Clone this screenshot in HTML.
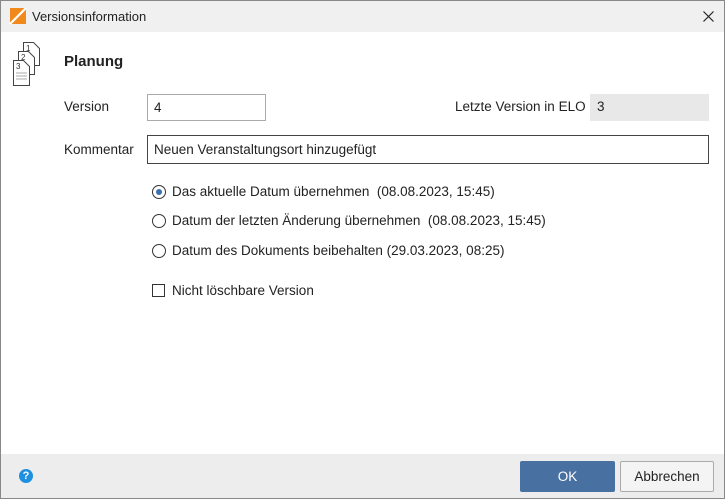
<html><head><style>
body{margin:0;width:725px;height:499px;overflow:hidden;font-family:"Liberation Sans",sans-serif;font-size:13.5px;color:#222}
.win{position:absolute;left:0;top:0;width:723px;height:497px;border:1px solid #888;background:#fff}
.title{position:absolute;left:0;top:0;width:723px;height:31px;background:#f0f0f0}
.abs{position:absolute}
.in{position:absolute;border:1px solid #aaa;background:#fff;box-sizing:border-box;padding:0 6px;line-height:26px}
.radio{position:absolute;width:12px;height:12px;border:1px solid #333;border-radius:50%;background:#fff}
.foot{position:absolute;left:0;top:453px;width:723px;height:44px;background:#ededee}
</style></head><body><div class="win">
<div class="title">
<div class="abs" style="left:9px;top:7px;width:16px;height:16px;background:#f08a1c"></div>
<div class="abs" style="left:8px;top:7px;width:18px;height:16px;background:linear-gradient(135deg,transparent 45%,#fff 46%,#fff 54%,transparent 55%)"></div>
<div class="abs" style="left:31px;top:8px;font-size:13px">Versionsinformation</div>
<svg class="abs" style="left:702px;top:10px" width="11" height="11"><path d="M0.5 0.5L10.5 10.5M10.5 0.5L0.5 10.5" stroke="#222" stroke-width="1.2"/></svg>
</div>
<svg class="abs" style="left:11px;top:40px" width="32" height="46" viewBox="0 0 32 46" fill="#fff" stroke="#444" stroke-width="1">
<path d="M11.5 1.5h10l6 6v17h-16z"/><path d="M6.5 10.5h10l6 6v17h-16z"/><path d="M1.5 19.5h10l6 6v19h-16z"/>
<text x="14" y="10" font-size="8" fill="#333" stroke="none">1</text><text x="9" y="19" font-size="8" fill="#333" stroke="none">2</text><text x="4" y="28" font-size="8" fill="#333" stroke="none">3</text>
<path d="M4 32h11M4 35h11M4 38h11" stroke="#aaa"/></svg>
<div class="abs" style="left:63px;top:52px;font-weight:bold;font-size:15px">Planung</div>
<div class="abs" style="left:63px;top:98px">Version</div>
<div class="in" style="left:146px;top:93px;width:119px;height:27px">4</div>
<div class="abs" style="left:454px;top:98px">Letzte Version in ELO</div>
<div class="abs" style="left:589px;top:93px;width:119px;height:27px;background:#e8e8e8;line-height:26px;padding-left:7px;box-sizing:border-box">3</div>
<div class="abs" style="left:63px;top:141px">Kommentar</div>
<div class="in" style="left:146px;top:134px;width:562px;height:29px;border-color:#444;line-height:27px">Neuen Veranstaltungsort hinzugefügt</div>
<div class="radio" style="left:151px;top:184px"></div><div class="abs" style="left:155px;top:188px;width:6px;height:6px;border-radius:50%;background:#3c6fb0"></div>
<div class="abs" style="left:171px;top:183px">Das aktuelle Datum übernehmen&nbsp; (08.08.2023, 15:45)</div>
<div class="radio" style="left:151px;top:213px"></div>
<div class="abs" style="left:171px;top:212px">Datum der letzten Änderung übernehmen&nbsp; (08.08.2023, 15:45)</div>
<div class="radio" style="left:151px;top:243px"></div>
<div class="abs" style="left:171px;top:242px">Datum des Dokuments beibehalten (29.03.2023, 08:25)</div>
<div class="abs" style="left:151px;top:283px;width:11px;height:11px;border:1px solid #333"></div>
<div class="abs" style="left:171px;top:282px">Nicht löschbare Version</div>
<div class="foot">
<div class="abs" style="left:18px;top:15px;width:14px;height:14px;border-radius:50%;background:#1e90e0;color:#fff;font-size:11px;font-weight:bold;text-align:center;line-height:14px">?</div>
<div class="abs" style="left:519px;top:7px;width:95px;height:31px;background:#4870a0;border-radius:2px;color:#fff;text-align:center;line-height:31px">OK</div>
<div class="abs" style="left:619px;top:7px;width:92px;height:29px;border:1px solid #aaa;border-radius:2px;background:#f4f4f4;text-align:center;line-height:29px">Abbrechen</div>
</div>
</div></body></html>
